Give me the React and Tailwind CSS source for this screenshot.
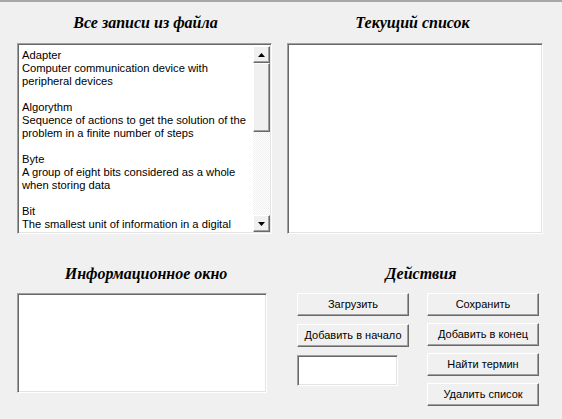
import React from "react";

const ENTRIES = [
  ["Adapter", "Computer communication device with", "peripheral devices"],
  ["Algorythm", "Sequence of actions to get the solution of the", "problem in a finite number of steps"],
  ["Byte", "A group of eight bits considered as a whole", "when storing data"],
  ["Bit", "The smallest unit of information in a digital"],
];

const sunken =
  "border border-t-[#a0a0a0] border-l-[#a0a0a0] border-r-white border-b-white shadow-[inset_1px_1px_0_#696969,inset_-1px_-1px_0_#e3e3e3] bg-white";

const raised =
  "border border-t-white border-l-white border-r-[#696969] border-b-[#696969] shadow-[inset_-1px_-1px_0_#a0a0a0] bg-[#f0f0f0] text-[11px] text-black font-['Liberation_Sans',Tahoma,sans-serif] leading-none flex items-center justify-center";

function Heading({ children, className = "" }) {
  return (
    <div
      className={`text-center text-[16px] font-bold italic text-black font-['Liberation_Serif','Times_New_Roman',serif] ${className}`}
    >
      {children}
    </div>
  );
}

function ScrollButton({ up }) {
  return (
    <div className="h-[17px] w-[17px] border border-t-white border-l-white border-r-[#696969] border-b-[#696969] shadow-[inset_-1px_-1px_0_#a0a0a0] bg-[#f0f0f0] flex items-center justify-center">
      <svg width="7" height="4" viewBox="0 0 7 4">
        {up ? <path d="M3.5 0 L7 4 L0 4 Z" fill="#000" /> : <path d="M0 0 L7 0 L3.5 4 Z" fill="#000" />}
      </svg>
    </div>
  );
}

export default function App() {
  return (
    <div className="w-[562px] h-[419px] bg-[#f0f0f0] overflow-hidden border-t-2 border-t-[#a8a8a8]">
      {/* top row */}
      <div className="flex pl-[17px] pt-[9px]">
        <div className="w-[255px]">
          <Heading className="h-[32px] pl-[2px]">Все записи из файла</Heading>
          <div className={`${sunken} h-[191px] flex`}>
            <div className="flex-1 overflow-hidden pl-[4px] pt-[5px] text-[11.2px] leading-[13px] text-black font-['Liberation_Sans',Tahoma,sans-serif]">
              {ENTRIES.map((e, i) => (
                <div key={i} className="mb-[13px]">
                  {e.map((line, j) => (
                    <div key={j} className="whitespace-nowrap">{line}</div>
                  ))}
                </div>
              ))}
            </div>
            <div className="w-[17px] mt-[2px] mb-[1px] mr-[1px] flex flex-col bg-[repeating-conic-gradient(#f0f0f0_0_25%,#ffffff_0_50%)] bg-[length:2px_2px]">
              <ScrollButton up />
              <div className="h-[69px] border border-t-white border-l-white border-r-[#696969] border-b-[#696969] shadow-[inset_-1px_-1px_0_#a0a0a0] bg-[#f0f0f0]" />
              <div className="flex-1" />
              <ScrollButton />
            </div>
          </div>
        </div>
        <div className="w-[256px] ml-[15px]">
          <Heading className="h-[32px] pr-[5px]">Текущий список</Heading>
          <div className={`${sunken} h-[191px]`} />
        </div>
      </div>

      {/* bottom row */}
      <div className="flex pl-[17px] pt-[27px]">
        <div className="w-[250px]">
          <Heading className="h-[32px] pt-[1px] mr-[-8px]">Информационное окно</Heading>
          <div className={`${sunken} h-[100px]`} />
        </div>
        <div className="ml-[30px] w-[242px]">
          <Heading className="h-[32px] pt-[1px] pl-[6px]">Действия</Heading>
          <div className="grid grid-cols-[112px_112px] gap-x-[18px]">
            <div className="flex flex-col gap-[8px]">
              <div className={`${raised} h-[23px]`}>Загрузить</div>
              <div className={`${raised} h-[23px]`}>Добавить в начало</div>
              <div className={`${sunken} h-[31px] w-[101px]`} />
            </div>
            <div className="flex flex-col gap-[7px]">
              <div className={`${raised} h-[23px]`}>Сохранить</div>
              <div className={`${raised} h-[23px]`}>Добавить в конец</div>
              <div className={`${raised} h-[23px]`}>Найти термин</div>
              <div className={`${raised} h-[23px]`}>Удалить список</div>
            </div>
          </div>
        </div>
      </div>
    </div>
  );
}
